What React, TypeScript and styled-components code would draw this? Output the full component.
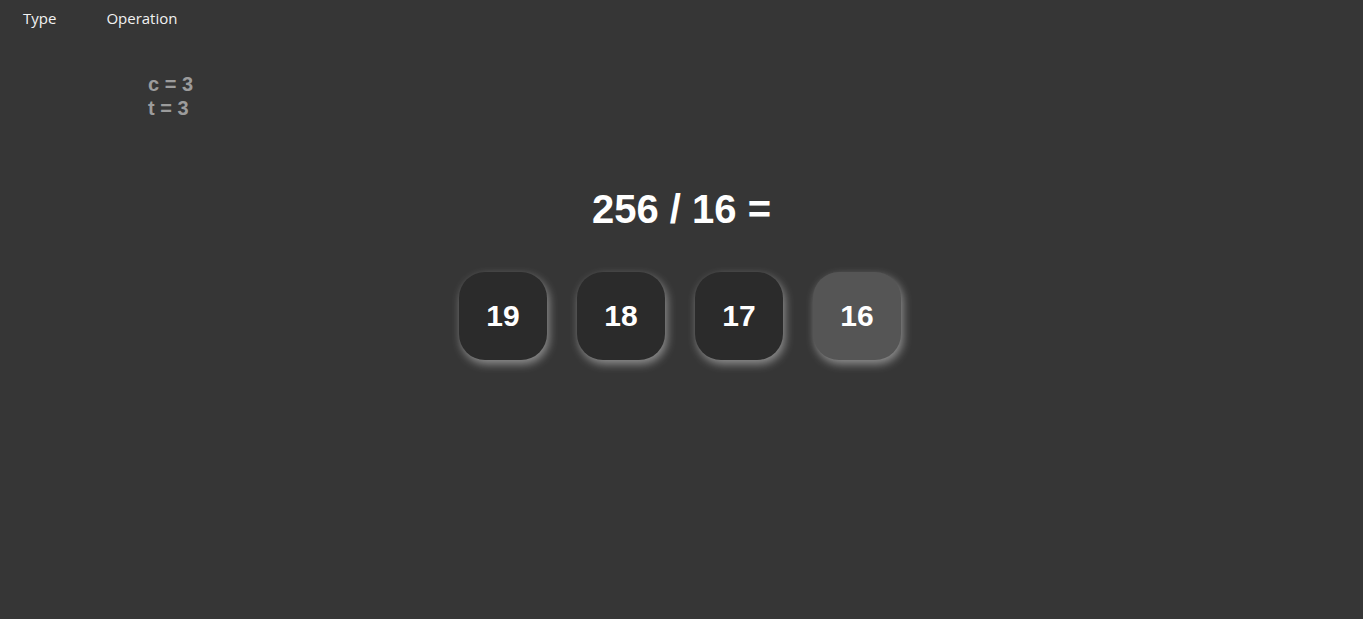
import React from "react";
import styled, { createGlobalStyle } from "styled-components";

const Global = createGlobalStyle`
  html, body { margin: 0; padding: 0; background: #363636; }
  body { min-height: 619px; font-family: "Liberation Sans", Arial, sans-serif; }
`;

const Page = styled.div`
  min-height: 619px;
  background: #363636;
  display: flex;
  flex-direction: column;
`;

const Nav = styled.nav`
  height: 36px;
  display: flex;
  align-items: center;
  padding-left: 23px;
  gap: 50px;
`;

const NavItem = styled.span`
  font-family: "Comic Sans MS", "Open Sans", sans-serif;
  font-size: 15px;
  color: #f2f2f2;
  cursor: pointer;
`;

const Stats = styled.div`
  margin: 36px 0 0 148px;
  font-family: "Liberation Sans", Arial, sans-serif;
  font-weight: bold;
  font-size: 20px;
  line-height: 24px;
  color: #9c9c9c;
`;

const Question = styled.h1`
  margin: 66px 0 0;
  text-align: center;
  font-family: "Liberation Sans", Arial, sans-serif;
  font-weight: bold;
  font-size: 40px;
  line-height: 46px;
  color: #ffffff;
`;

const Choices = styled.div`
  margin-top: 40px;
  display: flex;
  justify-content: center;
  gap: 30px;
  padding-right: 3px;
`;

const Choice = styled.button<{ $active?: boolean }>`
  width: 88px;
  height: 88px;
  border: none;
  border-radius: 26px;
  background: ${(p) => (p.$active ? "#555555" : "#2b2b2b")};
  color: #ffffff;
  font-family: "Liberation Sans", Arial, sans-serif;
  font-weight: bold;
  font-size: 30px;
  box-shadow: 2px 4px 10px rgba(255, 255, 255, 0.45);
  cursor: pointer;
  padding: 0;
`;

export default function App() {
  const options = [19, 18, 17, 16];
  return (
    <Page>
      <Global />
      <Nav>
        <NavItem>Type</NavItem>
        <NavItem>Operation</NavItem>
      </Nav>
      <Stats>
        <div>c = 3</div>
        <div>t = 3</div>
      </Stats>
      <Question>256 / 16 =</Question>
      <Choices>
        {options.map((o) => (
          <Choice key={o} $active={o === 16}>
            {o}
          </Choice>
        ))}
      </Choices>
    </Page>
  );
}
